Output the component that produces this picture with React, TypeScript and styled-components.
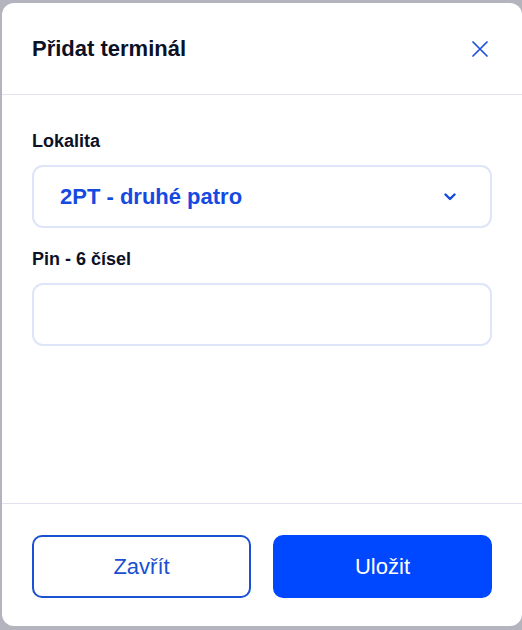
import React, { useState } from 'react';
import styled, { createGlobalStyle } from 'styled-components';

const GlobalStyle = createGlobalStyle`
  html, body {
    margin: 0;
    padding: 0;
    background: #b4b4be;
    font-family: 'Liberation Sans', Arial, sans-serif;
  }
`;

const Backdrop = styled.div`
  width: 522px;
  height: 630px;
  padding: 3px 0 0 2px;
  box-sizing: border-box;
  overflow: hidden;
`;

const Modal = styled.div`
  width: 520px;
  height: 623px;
  background: #ffffff;
  border-radius: 12px;
  display: flex;
  flex-direction: column;
`;

const Header = styled.div`
  height: 92px;
  box-sizing: border-box;
  padding: 0 34px 0 30px;
  display: flex;
  align-items: center;
  justify-content: space-between;
  border-bottom: 1.5px solid #e1e2f1;
`;

const Title = styled.h2`
  margin: 0;
  font-size: 22px;
  font-weight: 700;
  color: #0c1126;
`;

const CloseBtn = styled.button`
  width: 17px;
  height: 17px;
  padding: 0;
  border: none;
  background: none;
  display: flex;
  align-items: center;
  justify-content: center;
  cursor: pointer;
`;

const Body = styled.div`
  flex: 1;
  padding: 35px 30px 0;
  display: flex;
  flex-direction: column;
  gap: 20px;
`;

const Field = styled.div`
  display: flex;
  flex-direction: column;
`;

const Label = styled.label`
  font-size: 18px;
  line-height: 22px;
  font-weight: 700;
  color: #0c1126;
  margin-bottom: 13px;
`;

const Box = styled.div`
  height: 63px;
  box-sizing: border-box;
  border: 2px solid #dfe5f8;
  border-radius: 11px;
  display: flex;
  align-items: center;
  justify-content: space-between;
  padding: 0 34px 0 26px;
`;

const SelectValue = styled.span`
  font-size: 22px;
  font-weight: 700;
  color: #1549e2;
`;

const PinInput = styled.input`
  height: 63px;
  box-sizing: border-box;
  border: 2px solid #dfe5f8;
  border-radius: 11px;
  padding: 0 26px;
  font-size: 20px;
  font-family: inherit;
  outline: none;
`;

const Footer = styled.div`
  border-top: 1.5px solid #e1e2f1;
  padding: 31px 30px 28px;
  display: flex;
  gap: 22px;
`;

const Button = styled.button<{ $primary?: boolean }>`
  flex: 1;
  height: 63px;
  box-sizing: border-box;
  border-radius: 10px;
  font-family: inherit;
  font-size: 22px;
  cursor: pointer;
  border: 2px solid ${(p) => (p.$primary ? '#0048ff' : '#1a50d2')};
  background: ${(p) => (p.$primary ? '#0048ff' : '#ffffff')};
  color: ${(p) => (p.$primary ? '#ffffff' : '#1a4fd0')};
`;

const App = () => {
  const [pin, setPin] = useState('');

  return (
    <>
      <GlobalStyle />
      <Backdrop>
        <Modal>
          <Header>
            <Title>Přidat terminál</Title>
            <CloseBtn aria-label="Zavřít">
              <svg width="16" height="16" viewBox="0 0 16 16">
                <path d="M1 1 L15 15 M15 1 L1 15" stroke="#1f51d8" strokeWidth="1.7" strokeLinecap="round" />
              </svg>
            </CloseBtn>
          </Header>
          <Body>
            <Field>
              <Label>Lokalita</Label>
              <Box>
                <SelectValue>2PT - druhé patro</SelectValue>
                <svg width="12" height="8" viewBox="0 0 12 8">
                  <path d="M1.5 1.5 L6 6 L10.5 1.5" stroke="#1549e2" strokeWidth="2.4" fill="none" strokeLinecap="round" strokeLinejoin="round" />
                </svg>
              </Box>
            </Field>
            <Field>
              <Label>Pin - 6 čísel</Label>
              <PinInput value={pin} onChange={(e) => setPin(e.target.value)} />
            </Field>
          </Body>
          <Footer>
            <Button>Zavřít</Button>
            <Button $primary>Uložit</Button>
          </Footer>
        </Modal>
      </Backdrop>
    </>
  );
};

export default App;
